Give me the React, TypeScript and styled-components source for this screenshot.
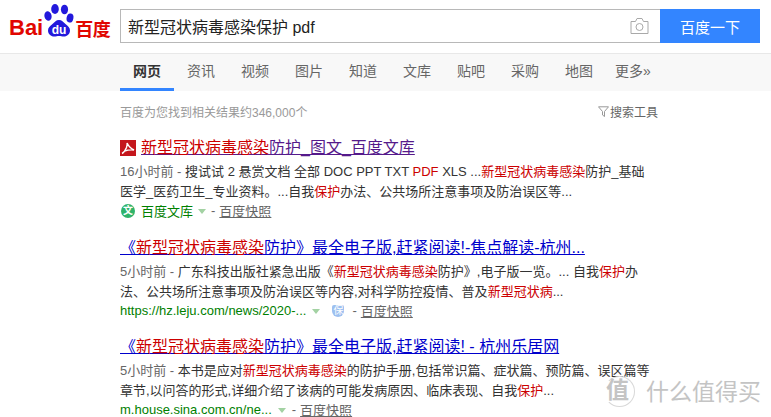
import React from "react";
import styled, { createGlobalStyle } from "styled-components";

const GlobalStyle = createGlobalStyle`
  html, body {
    margin: 0;
    padding: 0;
    background: #fff;
    overflow: hidden;
  }
  body {
    font-family: "Liberation Sans", "Noto Sans CJK SC", sans-serif;
  }
`;

const Page = styled.div`
  position: relative;
  width: 771px;
  height: 417px;
  overflow: hidden;
`;

const Header = styled.header`
  display: flex;
  align-items: flex-start;
  height: 54px;
  box-sizing: border-box;
  padding-top: 9px;
  border-bottom: 1px solid #e8e8e8;
`;

const Logo = styled.div`
  width: 120px;
  height: 34px;
  box-sizing: border-box;
  padding-left: 9px;
  display: flex;
  align-items: flex-end;
  color: #e10601;
  font-weight: 700;
`;

const LogoLatin = styled.span`
  font-size: 22px;
  line-height: 22px;
  margin-bottom: 4px;
`;

const LogoCjk = styled.span`
  font-size: 18px;
  line-height: 20px;
  margin-bottom: 3px;
  letter-spacing: -0.5px;
`;

const Paw = styled.svg`
  width: 32px;
  height: 34px;
  margin-bottom: 6px;
  flex: none;
`;

const SearchBox = styled.div`
  width: 540px;
  height: 34px;
  box-sizing: border-box;
  border: 1px solid #b8b8b8;
  border-right: none;
  display: flex;
  align-items: center;
  padding: 0 11px 0 7px;
  font-size: 16px;
  color: #222;
`;

const Query = styled.span`
  flex: 1;
`;

const SearchButton = styled.button`
  width: 100px;
  height: 34px;
  border: none;
  padding: 0;
  background: #3385ff;
  color: #fff;
  font-family: inherit;
  font-size: 15px;
`;

const Nav = styled.nav`
  display: flex;
  height: 37px;
  background: #f8f8f8;
  padding-left: 120px;
`;

const Tab = styled.a<{ $active?: boolean }>`
  box-sizing: border-box;
  width: 54px;
  height: 37px;
  line-height: 35px;
  text-align: center;
  font-size: 14px;
  color: ${(p) => (p.$active ? "#333" : "#666")};
  font-weight: ${(p) => (p.$active ? 700 : 400)};
  border-bottom: 3px solid ${(p) => (p.$active ? "#3385ff" : "transparent")};
`;

const Main = styled.main`
  width: 540px;
  margin-left: 120px;
`;

const CountRow = styled.div`
  display: flex;
  justify-content: space-between;
  align-items: center;
  height: 20px;
  margin-top: 10px;
  padding-right: 2px;
  font-size: 12px;
  color: #999;
`;

const Tools = styled.span`
  display: flex;
  align-items: center;
  gap: 1px;
  color: #666;
`;

const Result = styled.article`
  margin-bottom: 15px;
  &:first-of-type {
    margin-top: 15px;
    margin-bottom: 16px;
  }
`;

const Title = styled.a`
  display: flex;
  align-items: center;
  gap: 5px;
  height: 24px;
  line-height: 24px;
  font-size: 16px;
  color: #00c;
  white-space: nowrap;
`;

const TitleText = styled.span<{ $visited?: boolean }>`
  text-decoration: underline;
  color: ${(p) => (p.$visited ? "#551a8b" : "#00c")};
`;

const Em = styled.em`
  font-style: normal;
  color: #c00;
`;

const Abstract = styled.div`
  margin-top: 2px;
  font-size: 13px;
  line-height: 19.5px;
  color: #333;
  white-space: nowrap;
`;

const Time = styled.span`
  color: #666;
`;

const Source = styled.div`
  display: flex;
  align-items: center;
  height: 19px;
  font-size: 13px;
  color: #008000;
  white-space: nowrap;
`;

const Caret = styled.i<{ $tight?: boolean }>`
  width: 0;
  height: 0;
  margin: 2px ${(p) => (p.$tight ? "5px" : "6px")} 0 ${(p) => (p.$tight ? "5px" : "6px")};
  border-left: 4px solid transparent;
  border-right: 4px solid transparent;
  border-top: 5px solid #a3d2a3;
`;

const Snapshot = styled.a`
  color: #666;
  text-decoration: underline;
`;

const Dash = styled.span`
  color: #666;
  margin-right: 4px;
`;

const SourceIcon = styled.span`
  width: 14px;
  height: 14px;
  border-radius: 50%;
  margin: 0 6px 0 1px;
  background: #2fb36a;
  color: #fff;
  font-size: 10px;
  line-height: 14px;
  text-align: center;
  font-weight: 700;
`;

const SafeBadge = styled.span`
  width: 12px;
  height: 12px;
  border-radius: 2px 2px 6px 6px;
  margin: 0 8px 0 6px;
  background: #9dc0f0;
  color: #fff;
  font-size: 10px;
  line-height: 12px;
  text-align: center;
`;

const Watermark = styled.div`
  position: absolute;
  right: 10px;
  bottom: 10px;
  display: flex;
  align-items: center;
  gap: 11px;
  color: #c4c4c4;
`;

const WatermarkSeal = styled.span`
  width: 29px;
  height: 29px;
  border-radius: 50%;
  border: 1px solid #d8d8d8;
  border-left-color: transparent;
  font-size: 23px;
  line-height: 27px;
  text-align: center;
  font-weight: 700;
  text-indent: -4px;
`;

const WatermarkName = styled.span`
  font-size: 23px;
  line-height: 28px;
`;

const tabs = ["资讯", "视频", "图片", "知道", "文库", "贴吧", "采购", "地图"];

const PawIcon = () => (
  <Paw viewBox="0 0 32 34">
    <g fill="#2319dc">
      <ellipse cx="5" cy="13" rx="3.6" ry="4.8" transform="rotate(-12 5 13)" />
      <ellipse cx="12" cy="6" rx="3.8" ry="5" />
      <ellipse cx="21.500" cy="6.500" rx="3.6" ry="4.8" />
      <ellipse cx="27" cy="15" rx="3.4" ry="4.6" transform="rotate(12 27 15)" />
      <path d="M16 17c-3 0-4 2-6.500 4C7 23 5 24.500 5 27.500c0 3.500 3 6 6 6 2 0 3.500-.6 5-.6s3 .6 5 .6c3 0 6-2.500 6-6 0-3-2-4.500-4.500-6.500C20 19 19 17 16 17z" />
    </g>
    <text x="16" y="31" textAnchor="middle" fontSize="12" fontWeight="700" fill="#fff" fontFamily="Liberation Sans, sans-serif">
      du
    </text>
  </Paw>
);

const CameraIcon = () => (
  <svg width="19" height="16" viewBox="0 0 19 16" fill="none" stroke="#a9a9a9" strokeWidth="1">
    <path d="M1 3.500h4.500L7 .5h5l1.500 3H18v12H1z" />
    <circle cx="9.500" cy="9" r="3.500" />
  </svg>
);

const FilterIcon = () => (
  <svg width="11" height="11" viewBox="0 0 11 11" fill="none" stroke="#999" strokeWidth="1">
    <path d="M.5 .8h10L6.500 5.500v5L4.500 9V5.500z" />
  </svg>
);

const PdfIcon = () => (
  <svg width="16" height="16" viewBox="0 0 16 16" style={{ flex: "none" }}>
    <rect width="16" height="16" fill="#c4161c" />
    <path
      d="M2 13.500c2-1 3.500-3.500 4.500-6 .6-1.800.8-3 .6-4.500C8.500 6 10.500 8.500 14 10c-3-.4-6.500 0-9.500 1.200"
      fill="none"
      stroke="#fff"
      strokeWidth="1.400"
    />
  </svg>
);

export default function App() {
  return (
    <Page>
      <GlobalStyle />
      <Header>
        <Logo>
          <LogoLatin>Bai</LogoLatin>
          <PawIcon />
          <LogoCjk>百度</LogoCjk>
        </Logo>
        <SearchBox>
          <Query>新型冠状病毒感染保护 pdf</Query>
          <CameraIcon />
        </SearchBox>
        <SearchButton>百度一下</SearchButton>
      </Header>
      <Nav>
        <Tab $active>网页</Tab>
        {tabs.map((t) => (
          <Tab key={t}>{t}</Tab>
        ))}
        <Tab>更多»</Tab>
      </Nav>
      <Main>
        <CountRow>
          <span>百度为您找到相关结果约346,000个</span>
          <Tools>
            <FilterIcon />
            搜索工具
          </Tools>
        </CountRow>
        <Result>
          <Title>
            <PdfIcon />
            <TitleText $visited>
              <Em>新型冠状病毒感染</Em>防护_图文_百度文库
            </TitleText>
          </Title>
          <Abstract>
            <Time>16小时前 - </Time>搜试试 2 悬赏文档 全部 DOC PPT TXT <Em>PDF</Em> XLS ...<Em>新型冠状病毒感染</Em>防护_基础
            <br />
            医学_医药卫生_专业资料。...自我<Em>保护</Em>办法、公共场所注意事项及防治误区等...
          </Abstract>
          <Source>
            <SourceIcon>文</SourceIcon>
            百度文库
            <Caret $tight />
            <Dash>-</Dash>
            <Snapshot>百度快照</Snapshot>
          </Source>
        </Result>
        <Result>
          <Title>
            <TitleText>
              《<Em>新型冠状病毒感染</Em>防护》最全电子版,赶紧阅读!-焦点解读-杭州...
            </TitleText>
          </Title>
          <Abstract>
            <Time>5小时前 - </Time>广东科技出版社紧急出版《<Em>新型冠状病毒感染</Em>防护》,电子版一览。... 自我<Em>保护</Em>办
            <br />
            法、公共场所注意事项及防治误区等内容,对科学防控疫情、普及<Em>新型冠状病</Em>...
          </Abstract>
          <Source>
            https://hz.leju.com/news/2020-...
            <Caret />
            <SafeBadge>保</SafeBadge>
            <Dash>-</Dash>
            <Snapshot>百度快照</Snapshot>
          </Source>
        </Result>
        <Result>
          <Title>
            <TitleText>
              《<Em>新型冠状病毒感染</Em>防护》最全电子版,赶紧阅读! - 杭州乐居网
            </TitleText>
          </Title>
          <Abstract>
            <Time>5小时前 - </Time>本书是应对<Em>新型冠状病毒感染</Em>的防护手册,包括常识篇、症状篇、预防篇、误区篇等
            <br />
            章节,以问答的形式,详细介绍了该病的可能发病原因、临床表现、自我<Em>保护</Em>...
          </Abstract>
          <Source>
            m.house.sina.com.cn/ne...
            <Caret />
            <Dash>-</Dash>
            <Snapshot>百度快照</Snapshot>
          </Source>
        </Result>
      </Main>
      <Watermark>
        <WatermarkSeal>值</WatermarkSeal>
        <WatermarkName>什么值得买</WatermarkName>
      </Watermark>
    </Page>
  );
}
